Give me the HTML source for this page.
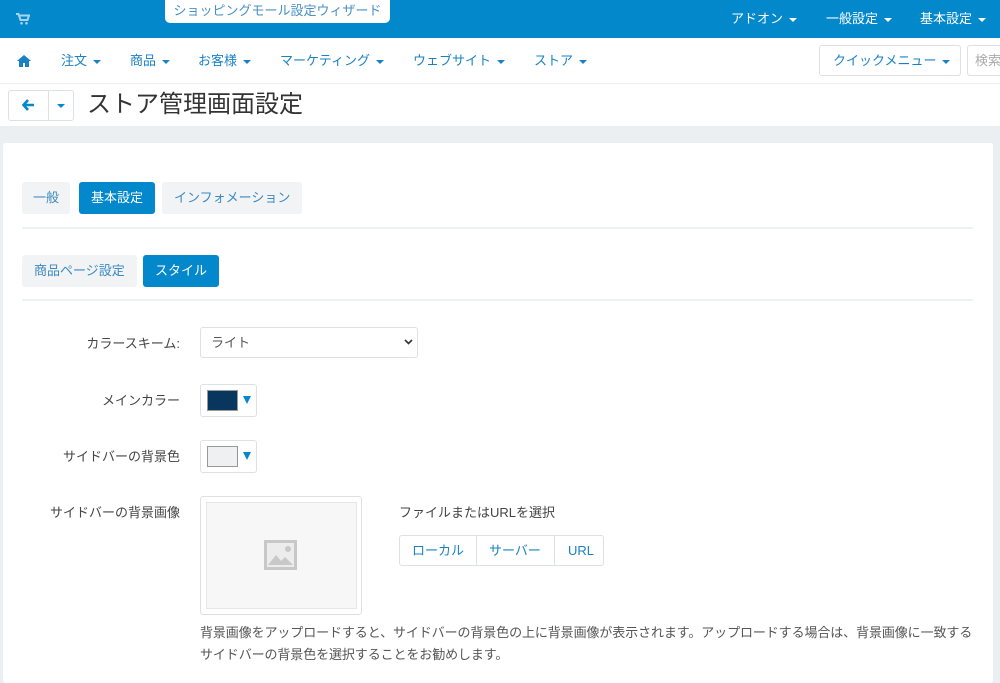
<!DOCTYPE html>
<html><head><meta charset="utf-8"><style>
*{box-sizing:border-box;margin:0;padding:0}
body{width:1000px;height:677px;overflow:hidden;background:#eceff2;font-family:"Liberation Sans","Noto Sans CJK JP",sans-serif;font-size:13px;color:#333;position:relative}
.a{position:absolute}
.top{left:0;top:0;width:1000px;height:38px;background:#0388cb}
.wiz{left:165px;top:0;width:225px;height:23px;background:#fff;border-radius:0 0 5px 5px;color:#4a90c2;font-size:13px;line-height:22px;text-align:center}
.tm{color:#fff;top:10px;font-size:13px;line-height:18px}
.car{display:inline-block;width:0;height:0;border-left:4px solid transparent;border-right:4px solid transparent;border-top:4px solid currentColor;vertical-align:middle;margin-left:6px}
.nav{left:0;top:38px;width:1000px;height:46px;background:#fff;border-bottom:1px solid #eef0f2}
.ni{top:52px;color:#1a82c4;font-size:13px;line-height:18px}
.tb{left:0;top:84px;width:1000px;height:42px;background:#fff}
.card{left:3px;top:143px;width:990px;height:540px;background:#fff;border-radius:3px}
.btn{height:32px;line-height:32px;border-radius:3px;padding:0 12px;font-size:13px;background:#f2f3f4;color:#3b8ac2}
.btn.on{background:#0388cb;color:#fff}
.hr{left:22px;width:951px;height:2px;background:#eef1f4}
.lbl{width:180px;text-align:right;left:0;color:#444;font-size:13px;line-height:18px}
.sw{width:57px;height:33px;border:1px solid #dde1e5;border-radius:3px;background:#fff}
.sw i{position:absolute;left:6px;top:5px;width:31px;height:21px;border:1px solid #999}
.sw b{position:absolute;left:42px;top:11px;width:0;height:0;border-left:4px solid transparent;border-right:4px solid transparent;border-top:8px solid #0388cb}
</style></head><body>
<div class="a top"></div>
<svg class="a" style="left:16px;top:13px" width="14" height="12" viewBox="0 0 14 12"><path d="M0 1h2.5l2 6h7l1.5-4.5H4" fill="none" stroke="#a9d3ee" stroke-width="2"/><circle cx="5.5" cy="10.3" r="1.3" fill="#a9d3ee"/><circle cx="10.5" cy="10.3" r="1.3" fill="#a9d3ee"/></svg>
<div class="a wiz">ショッピングモール設定ウィザード</div>
<div class="a tm" style="left:731px">アドオン<span class="car"></span></div>
<div class="a tm" style="left:826px">一般設定<span class="car"></span></div>
<div class="a tm" style="left:920px">基本設定<span class="car"></span></div>
<div class="a nav"></div>
<svg class="a" style="left:17px;top:55px" width="14" height="12" viewBox="0 0 14 12"><path d="M7 0L0 6h2v6h4V8h2v4h4V6h2z" fill="#1a82c4"/></svg>
<div class="a ni" style="left:61px">注文<span class="car"></span></div>
<div class="a ni" style="left:130px">商品<span class="car"></span></div>
<div class="a ni" style="left:198px">お客様<span class="car"></span></div>
<div class="a ni" style="left:280px">マーケティング<span class="car"></span></div>
<div class="a ni" style="left:413px">ウェブサイト<span class="car"></span></div>
<div class="a ni" style="left:534px">ストア<span class="car"></span></div>
<div class="a" style="left:819px;top:45px;width:142px;height:31px;border:1px solid #dde1e5;border-radius:3px;color:#1a82c4;line-height:29px;padding-left:13px">クイックメニュー<span class="car"></span></div>
<div class="a" style="left:967px;top:45px;width:40px;height:31px;border:1px solid #dde1e5;border-radius:3px;color:#aaa;line-height:29px;padding-left:7px">検索</div>
<div class="a tb"></div>
<div class="a" style="left:8px;top:90px;width:66px;height:31px;border:1px solid #dde1e5;border-radius:3px"></div>
<div class="a" style="left:48px;top:90px;width:1px;height:31px;background:#dde1e5"></div>
<svg class="a" style="left:22px;top:99px" width="13" height="12" viewBox="0 0 13 12"><path d="M6 1L1.5 6 6 11M2 6h10" fill="none" stroke="#0388cb" stroke-width="2.6"/></svg>
<div class="a" style="left:57px;top:104px;width:0;height:0;border-left:4px solid transparent;border-right:4px solid transparent;border-top:4px solid #0388cb"></div>
<div class="a" style="left:87px;top:90px;font-size:24px;color:#333;line-height:30px">ストア管理画面設定</div>
<div class="a card"></div>
<div class="a btn" style="left:22px;top:182px;padding:0 11px">一般</div>
<div class="a btn on" style="left:79px;top:182px">基本設定</div>
<div class="a btn" style="left:162px;top:182px">インフォメーション</div>
<div class="a hr" style="top:227px"></div>
<div class="a btn" style="left:22px;top:255px">商品ページ設定</div>
<div class="a btn on" style="left:143px;top:255px">スタイル</div>
<div class="a hr" style="top:299px"></div>
<div class="a lbl" style="top:335px">カラースキーム:</div>
<div class="a" style="left:200px;top:327px;width:218px;height:31px;border:1px solid #dde1e5;border-radius:3px;line-height:29px;padding-left:10px;color:#555">ライト</div>
<svg class="a" style="left:404px;top:339px" width="9" height="6" viewBox="0 0 9 6"><path d="M1 1l3.5 3.5L8 1" fill="none" stroke="#333" stroke-width="1.6"/></svg>
<div class="a lbl" style="top:392px">メインカラー</div>
<div class="a sw" style="left:200px;top:384px"><i style="background:#08365f"></i><b></b></div>
<div class="a lbl" style="top:448px">サイドバーの背景色</div>
<div class="a sw" style="left:200px;top:440px"><i style="background:#eef0f2"></i><b></b></div>
<div class="a lbl" style="top:504px">サイドバーの背景画像</div>
<div class="a" style="left:200px;top:496px;width:162px;height:119px;border:1px solid #dde1e5;border-radius:3px"></div>
<div class="a" style="left:206px;top:502px;width:151px;height:107px;background:#f7f7f7;border:1px solid #e6e6e6"></div>
<svg class="a" style="left:264px;top:540px" width="33" height="30" viewBox="0 0 33 30"><rect x="1.5" y="1.5" width="30" height="27" fill="#ececec" stroke="#c8c8c8" stroke-width="3"/><path d="M4 25l8-10 5 6 4-4 8 8z" fill="#c8c8c8"/><circle cx="24" cy="9" r="3" fill="#c8c8c8"/></svg>
<div class="a" style="left:399px;top:504px;color:#444;line-height:18px">ファイルまたはURLを選択</div>
<div class="a" style="left:399px;top:535px;width:205px;height:31px;border:1px solid #dde1e5;border-radius:3px"></div>
<div class="a" style="left:476px;top:535px;width:1px;height:31px;background:#dde1e5"></div>
<div class="a" style="left:554px;top:535px;width:1px;height:31px;background:#dde1e5"></div>
<div class="a" style="left:412px;top:542px;color:#1a82c4;line-height:18px">ローカル</div>
<div class="a" style="left:489px;top:542px;color:#1a82c4;line-height:18px">サーバー</div>
<div class="a" style="left:568px;top:542px;color:#1a82c4;line-height:18px">URL</div>
<div class="a" style="left:200px;top:622px;width:790px;line-height:22px;color:#555;font-size:13px;letter-spacing:-0.1px">背景画像をアップロードすると、サイドバーの背景色の上に背景画像が表示されます。アップロードする場合は、背景画像に一致する<br>サイドバーの背景色を選択することをお勧めします。</div>
</body></html>
